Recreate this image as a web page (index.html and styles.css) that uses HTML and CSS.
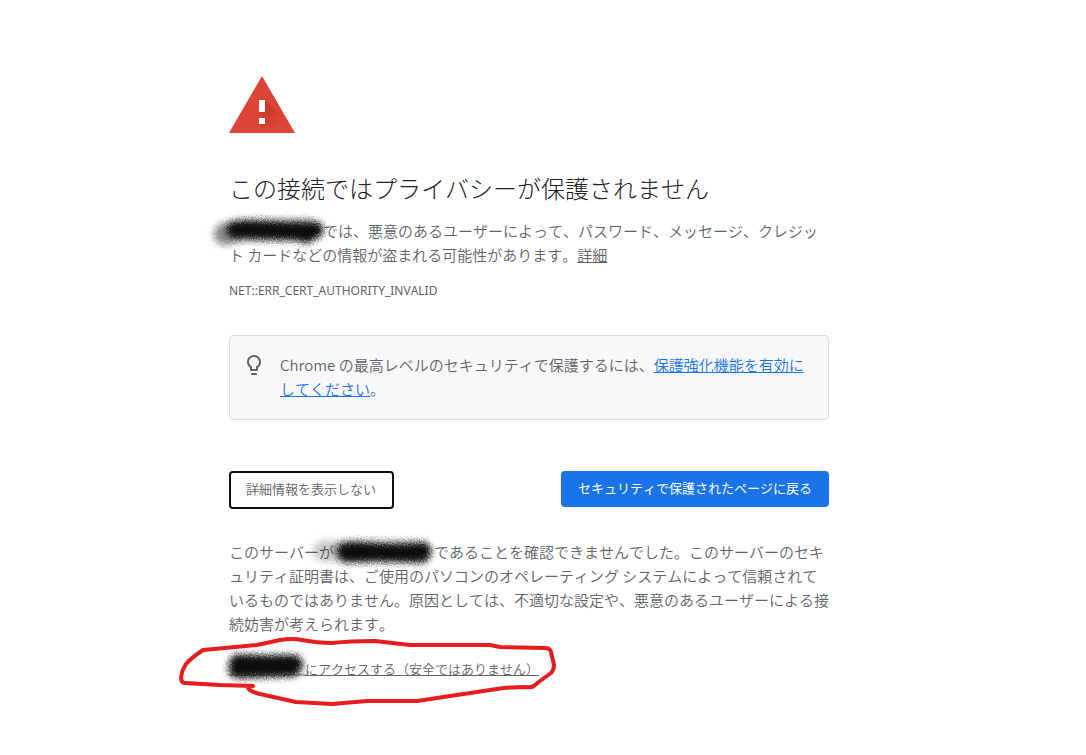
FILE: index.html
```html
<!DOCTYPE html>
<html lang="ja">
<head>
    <meta charset="UTF-8">
    <meta name="viewport" content="width=device-width, initial-scale=1.0">
    <title>プライバシー エラー</title>
    <link rel="stylesheet" href="styles.css">
</head>
<body>
    <main class="interstitial">
        <svg class="warning-icon" viewBox="0 0 66 57" aria-hidden="true">
            <defs>
                <linearGradient id="shade" gradientUnits="userSpaceOnUse" x1="33" y1="27" x2="50" y2="46">
                    <stop offset="0" stop-color="#a52714" stop-opacity=".5"/>
                    <stop offset="1" stop-color="#a52714" stop-opacity="0"/>
                </linearGradient>
            </defs>
            <path fill="#db4437" d="M33 0l33 57H0z"/>
            <path fill="url(#shade)" d="M36 24l20 20 7 13H39l-9-9 6-6-6-6z"/>
            <path fill="#fff" d="M30 24h6v12h-6zM30 42h6v6h-6z"/>
        </svg>

        <h1>この接続ではプライバシーが保護されません</h1>
        <p class="message"><span class="redacted redacted-site"><svg class="scribble" viewBox="0 0 124 44" aria-hidden="true">
            <defs>
                <filter id="spray" filterUnits="userSpaceOnUse" x="-40" y="-40" width="700" height="800">
                    <feGaussianBlur stdDeviation="3" result="soft"/>
                    <feTurbulence type="fractalNoise" baseFrequency="0.9" numOctaves="2" seed="4"/>
                    <feDisplacementMap in="soft" scale="7" xChannelSelector="R" yChannelSelector="G"/>
                </filter>
            </defs>
            <g filter="url(#spray)">
                <path class="haze" d="M16 24L32 20L98 20"/>
                <path class="ink" d="M26 20C45 17 65 22 102 21M34 20L98 22M96 25L106 20"/>
            </g>
        </svg></span>では、悪意のあるユーザーによって、パスワード、メッセージ、クレジット カードなどの情報が盗まれる可能性があります。<a href="#">詳細</a></p>
        <p class="error-code">NET::ERR_CERT_AUTHORITY_INVALID</p>

        <div class="tip">
            <svg class="bulb" viewBox="0 0 24 24" aria-hidden="true">
                <path fill="#646464" d="M9 21c0 .55.45 1 1 1h4c.55 0 1-.45 1-1v-1H9v1zm3-19C8.14 2 5 5.140 5 9c0 2.380 1.190 4.470 3 5.740V17c0 .55.45 1 1 1h6c.55 0 1-.45 1-1v-2.260c1.810-1.270 3-3.360 3-5.740 0-3.860-3.140-7-7-7zm2.850 11.100l-.85.6V16h-4v-2.300l-.85-.6C7.800 12.160 7 10.630 7 9c0-2.760 2.240-5 5-5s5 2.240 5 5c0 1.630-.8 3.160-2.150 4.100z"/>
            </svg>
            <p>Chrome の最高レベルのセキュリティで保護するには、<a href="#">保護強化機能を有効にしてください</a>。</p>
        </div>

        <div class="buttons">
            <button type="button" class="btn-details">詳細情報を表示しない</button>
            <button type="button" class="btn-primary">セキュリティで保護されたページに戻る</button>
        </div>

        <p class="details">このサーバーが<span class="redacted redacted-host"><svg class="scribble" viewBox="0 0 124 44" aria-hidden="true">
            <g filter="url(#spray)">
                <path class="haze faint" d="M10 20L20 20"/>
                <path class="haze" d="M32 21L106 21"/>
                <path class="ink" d="M32 20C46 16 66 26 109 20M34 23L62 21L108 23"/>
            </g>
        </svg></span>であることを確認できませんでした。このサーバーのセキュリティ証明書は、ご使用のパソコンのオペレーティング システムによって信頼されているものではありません。原因としては、不適切な設定や、悪意のあるユーザーによる接続妨害が考えられます。</p>

        <p class="proceed">
            <a href="#"><span class="redacted redacted-link"></span>にアクセスする（安全ではありません）</a>
            <svg class="marker" viewBox="170 630 400 85" aria-hidden="true">
                <path class="rule" d="M229 675L306 675"/>
                <g filter="url(#spray)">
                    <path class="haze" d="M238 668L292 665"/>
                    <path class="ink" d="M238 663L294 664M238 669L292 668"/>
                </g>
                <path class="pen" d="M253 686L220 685L185 683Q181 683 181 677Q182 670 186 664Q191 658 203 650L225 648L257 645L280 640Q292 638 302 640Q318 643 332 643Q350 641 375 641L410 645L490 645L500 647L545 648Q550 648 551 652L554 665Q554 670 551 673L540 681L535 685Q532 688 526 687Q510 687 497 689L417 701L367 701L332 704L296 702L260 694Q249 691 248 688"/>
            </svg>
        </p>
    </main>
</body>
</html>
```

FILE: styles.css
```css
body {
    margin: 0;
    padding: 76px 28px 48px 0;
    background-color: #fff;
    color: #5f6368;
    font-family: "Noto Sans CJK JP", sans-serif;
    font-size: 15px;
    font-weight: 350;
    font-kerning: none;
    line-height: 24px;
}
.interstitial {
    max-width: 600px;
    margin: 0 auto;
}
.warning-icon {
    display: block;
    width: 66px;
    height: 57px;
    margin-bottom: 40px;
}
h1 {
    margin: 0 0 16px;
    color: #202124;
    font-size: 24px;
    font-weight: 300;
    line-height: 30px;
}
p {
    margin: 0;
}
a {
    color: inherit;
    text-decoration: underline;
}
.error-code {
    margin-top: 12px;
    font-family: "Noto Sans", sans-serif;
    font-size: 12px;
    font-weight: 400;
}

/* tip box */
.tip {
    display: flex;
    gap: 14px;
    margin-top: 32px;
    padding: 17px 16px 18px 12px;
    border: 1px solid #dadce0;
    border-radius: 4px;
    background-color: #f8f8fb;
}
.tip a {
    color: #1a73e8;
}
.bulb {
    flex: none;
    width: 24px;
    height: 24px;
}

/* buttons */
.buttons {
    display: flex;
    justify-content: space-between;
    align-items: flex-start;
    margin-top: 51px;
}
button {
    border: 0;
    border-radius: 4px;
    font-family: inherit;
    font-size: 13px;
    font-kerning: none;
    line-height: 20px;
    cursor: pointer;
}
.btn-details {
    padding: 6px 16px 8px 15px;
    border: 2px solid #101010;
    background-color: #fff;
    color: #5f6368;
    font-weight: 350;
}
.btn-primary {
    padding: 7px 17px 9px;
    background-color: #1a73e8;
    color: #fff;
    font-weight: 400;
}
.details {
    margin-top: 31px;
}

/* hidden host names */
.redacted {
    display: inline-block;
    position: relative;
    height: 15px;
    vertical-align: -2px;
}
.redacted-site {
    width: 94px;
}
.redacted-host {
    width: 100px;
}
.redacted-link {
    width: 76px;
}
.scribble {
    position: absolute;
    top: -14px;
    left: -20px;
    width: 124px;
    height: 44px;
    overflow: visible;
}
.ink,
.haze,
.pen,
.rule {
    fill: none;
    stroke-linecap: round;
    stroke-linejoin: round;
}
.ink {
    stroke: #101010;
    stroke-width: 17px;
}
.haze {
    stroke: #101010;
    stroke-width: 22px;
    opacity: 0.5;
}
.faint {
    opacity: 0.2;
}
.rule {
    stroke: #5f6368;
    stroke-width: 1px;
}
.pen {
    stroke: #e81c1c;
    stroke-width: 4px;
}

/* link with the red marker around it */
.proceed {
    position: relative;
    margin-top: 21px;
    font-size: 13px;
}
.marker {
    position: absolute;
    top: -27px;
    left: -59px;
    width: 400px;
    height: 85px;
    pointer-events: none;
}
```
